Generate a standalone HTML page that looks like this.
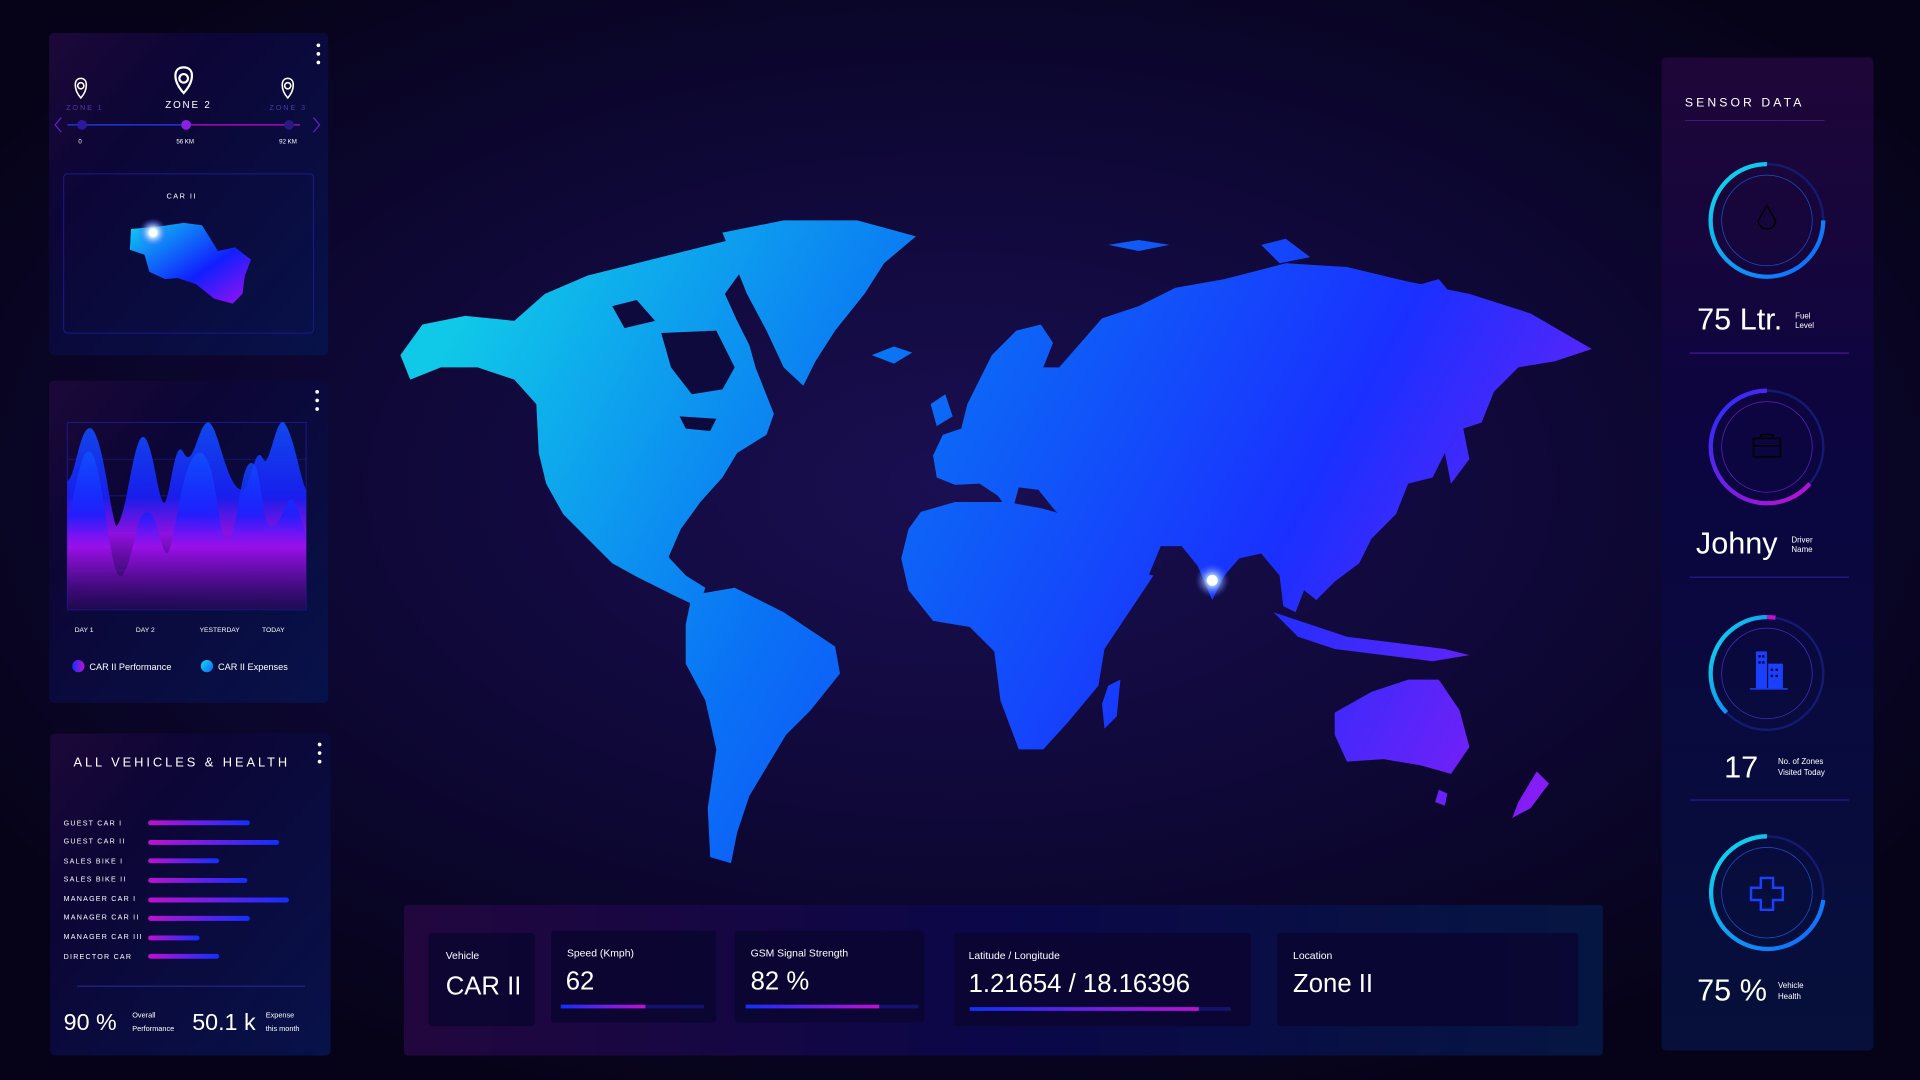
<!DOCTYPE html>
<html><head><meta charset="utf-8"><style>
html,body{margin:0;padding:0;width:1920px;height:1080px;overflow:hidden;background:#07041a}
svg{display:block}
text{font-family:"Liberation Sans",sans-serif;fill:#fff}
</style></head><body>
<svg width="1920" height="1080" viewBox="0 0 1568 882" xmlns="http://www.w3.org/2000/svg">
<defs>
<radialGradient id="bg" cx="50%" cy="45%" r="60%"><stop offset="0" stop-color="#1a0f52"/><stop offset="0.6" stop-color="#0d0733"/><stop offset="1" stop-color="#060318"/></radialGradient>
<linearGradient id="map" gradientUnits="userSpaceOnUse" x1="400" y1="220" x2="1250" y2="680"><stop offset="0" stop-color="#10c8e8"/><stop offset="0.35" stop-color="#0a70f5"/><stop offset="0.7" stop-color="#1a30ff"/><stop offset="1" stop-color="#8a1cf5"/></linearGradient>
<linearGradient id="panel" x1="0" y1="0" x2="1" y2="1"><stop offset="0" stop-color="#1c0838"/><stop offset="0.3" stop-color="#0c0636"/><stop offset="1" stop-color="#07124a"/></linearGradient>
<linearGradient id="rpanel" x1="0" y1="0" x2="0" y2="1"><stop offset="0" stop-color="#1f0638"/><stop offset="0.4" stop-color="#0b0540"/><stop offset="1" stop-color="#06103a"/></linearGradient>
<linearGradient id="bbar" x1="0" y1="0" x2="1" y2="0"><stop offset="0" stop-color="#22073e"/><stop offset="0.5" stop-color="#0b0748"/><stop offset="1" stop-color="#061642"/></linearGradient>
<linearGradient id="bar" x1="0" y1="0" x2="1" y2="0"><stop offset="0" stop-color="#c010d0"/><stop offset="1" stop-color="#1030ff"/></linearGradient>
<linearGradient id="bar2" x1="0" y1="0" x2="1" y2="0"><stop offset="0" stop-color="#1030ff"/><stop offset="1" stop-color="#c010d0"/></linearGradient>
<linearGradient id="wave1" x1="0" y1="0" x2="0" y2="1"><stop offset="0" stop-color="#1050ff"/><stop offset="0.4" stop-color="#1a20ff"/><stop offset="0.6" stop-color="#a010f0"/><stop offset="1" stop-color="#2a0a60" stop-opacity="0.4"/></linearGradient>
<linearGradient id="car" x1="0" y1="0" x2="1" y2="1"><stop offset="0" stop-color="#10d0f0"/><stop offset="0.6" stop-color="#1020ff"/><stop offset="1" stop-color="#a010f0"/></linearGradient>
<linearGradient id="ring1" x1="0" y1="0" x2="1" y2="1"><stop offset="0" stop-color="#10e0e8"/><stop offset="1" stop-color="#1060ff"/></linearGradient>
<linearGradient id="ring2" x1="0" y1="0" x2="1" y2="1"><stop offset="0" stop-color="#2030ff"/><stop offset="1" stop-color="#c010d0"/></linearGradient>
<radialGradient id="glow"><stop offset="0" stop-color="#fff"/><stop offset="0.3" stop-color="#cfefff"/><stop offset="1" stop-color="#3050ff" stop-opacity="0"/></radialGradient>
</defs>
<rect width="1568" height="882" fill="url(#bg)"/>

<!-- Left top panel -->
<rect x="40" y="27" width="228" height="263" rx="4" fill="url(#panel)"/>
<g fill="#fff"><circle cx="260" cy="37" r="1.5"/><circle cx="260" cy="44" r="1.5"/><circle cx="260" cy="51" r="1.5"/></g>
<g fill="none" stroke="#fff" stroke-width="1.3">
<path d="M66 80 C60 73 60 64 66 64 C72 64 72 73 66 80Z"/><circle cx="66" cy="70" r="2.5"/>
<path d="M150 76 C141 66 141 55 150 55 C159 55 159 66 150 76Z" stroke-width="1.8"/><circle cx="150" cy="64" r="3.5" stroke-width="1.8"/>
<path d="M235 80 C229 73 229 64 235 64 C241 64 241 73 235 80Z"/><circle cx="235" cy="70" r="2.5"/>
</g>
<text x="54" y="90" font-size="6" letter-spacing="1.5" style="fill:#4a3aa0">ZONE 1</text>
<text x="135" y="88" font-size="8" letter-spacing="1.5">ZONE 2</text>
<text x="220" y="90" font-size="6" letter-spacing="1.5" style="fill:#4a3aa0">ZONE 3</text>
<rect x="55" y="101.5" width="95" height="1" fill="#2040ff"/>
<rect x="150" y="101.5" width="95" height="1" fill="#c010d0"/>
<path d="M50 96 L45 102 L50 108" fill="none" stroke="#6020d0" stroke-width="1"/>
<path d="M256 96 L261 102 L256 108" fill="none" stroke="#6020d0" stroke-width="1"/>
<circle cx="67" cy="102" r="4" fill="#2a1aa0"/><circle cx="152" cy="102" r="4" fill="#8a20e0"/><circle cx="236" cy="102" r="4" fill="#2a1a80"/>
<text x="64" y="117" font-size="5">0</text><text x="144" y="117" font-size="5">56 KM</text><text x="228" y="117" font-size="5">92 KM</text>
<rect x="52" y="142" width="204" height="130" rx="3" fill="none" stroke="#1a1a90" stroke-width="0.8"/>
<text x="136" y="162" font-size="6" letter-spacing="1.2">CAR II</text>
<path d="M107 187 L130 185 L150 182 L165 184 L170 192 L178 205 L192 202 L205 212 L200 225 L198 240 L190 248 L175 244 L160 232 L145 227 L135 228 L122 222 L118 208 L106 204Z" fill="url(#car)"/>
<circle cx="125" cy="190" r="12" fill="url(#glow)"/><circle cx="125" cy="190" r="3.5" fill="#fff"/>

<!-- Left mid panel (chart) -->
<rect x="40" y="311" width="228" height="263" rx="4" fill="url(#panel)"/>
<g fill="#fff"><circle cx="259" cy="320" r="1.5"/><circle cx="259" cy="327" r="1.5"/><circle cx="259" cy="334" r="1.5"/></g>
<rect x="55" y="345" width="195" height="153" fill="none" stroke="#1a1a90" stroke-width="0.8"/>
<g stroke="#1a1a90" stroke-width="0.6"><line x1="55" y1="375" x2="250" y2="375"/><line x1="55" y1="405" x2="250" y2="405"/><line x1="55" y1="435" x2="250" y2="435"/><line x1="55" y1="466" x2="250" y2="466"/></g>
<path d="M55 393 C62 390 65 345 75 350 C85 360 90 420 95 430 C105 420 110 340 120 360 C127 375 130 415 135 410 C140 400 143 355 150 370 C158 385 162 345 170 345 C178 345 185 400 198 400 C205 400 208 360 215 375 C220 385 225 340 232 345 C240 355 245 390 250 400 L250 498 L55 498Z" fill="url(#wave1)" opacity="0.9"/>
<path d="M55 420 C62 410 65 360 75 370 C85 385 90 480 100 470 C110 455 110 420 120 418 C130 418 132 460 138 450 C145 430 150 365 165 370 C178 380 178 440 185 440 C195 440 195 380 205 378 C215 378 212 430 222 430 C230 430 235 400 240 410 C245 420 248 430 250 437 L250 498 L55 498Z" fill="url(#wave1)" opacity="0.85"/>
<g font-size="5.5"><text x="61" y="516">DAY 1</text><text x="111" y="516">DAY 2</text><text x="163" y="516">YESTERDAY</text><text x="214" y="516">TODAY</text></g>
<circle cx="64" cy="544" r="5" fill="url(#bar2)"/><text x="73" y="547" font-size="7.5">CAR II Performance</text>
<circle cx="169" cy="544" r="5" fill="url(#ring1)"/><text x="178" y="547" font-size="7.5">CAR II Expenses</text>

<!-- Left bottom panel -->
<rect x="41" y="599" width="229" height="263" rx="4" fill="url(#panel)"/>
<g fill="#fff"><circle cx="261" cy="608" r="1.5"/><circle cx="261" cy="615" r="1.5"/><circle cx="261" cy="622" r="1.5"/></g>
<text x="60" y="626" font-size="10.5" letter-spacing="2.4">ALL VEHICLES &amp; HEALTH</text>
<g font-size="5.8" letter-spacing="1">
<text x="52" y="674">GUEST CAR I</text><text x="52" y="689">GUEST CAR II</text><text x="52" y="705">SALES BIKE I</text><text x="52" y="720">SALES BIKE II</text>
<text x="52" y="736">MANAGER CAR I</text><text x="52" y="751">MANAGER CAR II</text><text x="52" y="767">MANAGER CAR III</text><text x="52" y="783">DIRECTOR CAR</text></g>
<g fill="url(#bar)">
<rect x="121" y="670" width="83" height="4" rx="2"/><rect x="121" y="686" width="107" height="4" rx="2"/><rect x="121" y="701" width="58" height="4" rx="2"/><rect x="121" y="717" width="81" height="4" rx="2"/>
<rect x="121" y="733" width="115" height="4" rx="2"/><rect x="121" y="748" width="83" height="4" rx="2"/><rect x="121" y="764" width="42" height="4" rx="2"/><rect x="121" y="779" width="58" height="4" rx="2"/></g>
<rect x="63" y="805" width="186" height="0.7" fill="#2a30b0"/>
<text x="52" y="841" font-size="19">90 %</text><text x="108" y="831" font-size="6">Overall</text><text x="108" y="842" font-size="6">Performance</text>
<text x="157" y="841" font-size="19">50.1 k</text><text x="217" y="831" font-size="6">Expense</text><text x="217" y="842" font-size="6">this month</text>

<!-- World map -->
<g fill="url(#map)">
<path d="M327 290 L345 265 L380 258 L420 262 L445 240 L480 225 L520 215 L560 205 L600 195 L610 215 L592 240 L602 262 L612 282 L617 300 L632 338 L626 355 L602 370 L590 390 L572 410 L556 432 L546 455 L560 470 L576 480 L571 496 L550 486 L520 471 L500 460 L480 440 L460 420 L446 395 L440 370 L438 330 L420 310 L390 300 L360 300 L335 310Z"/>
<path d="M440 245 L470 230 L500 222 L520 230 L510 245 L480 255 L450 258Z"/>
<path d="M590 190 L640 180 L700 180 L748 193 L722 215 L706 240 L682 270 L666 295 L656 315 L640 300 L626 270 L610 240 L600 215Z"/>
<path d="M712 290 L730 283 L745 288 L730 297Z"/>
<path d="M565 486 L600 480 L640 500 L682 528 L686 550 L662 580 L642 600 L627 625 L612 650 L602 680 L597 705 L580 700 L578 660 L585 612 L576 572 L560 542 L560 510Z"/>
<path d="M762 372 L770 355 L785 350 L790 330 L800 310 L810 290 L830 270 L850 265 L860 280 L852 300 L865 300 L900 260 L930 250 L960 235 L1000 228 L1050 215 L1100 218 L1150 230 L1200 240 L1250 256 L1300 285 L1270 295 L1240 300 L1220 320 L1210 345 L1195 350 L1180 370 L1170 390 L1150 395 L1140 420 L1120 440 L1110 460 L1090 475 L1075 490 L1065 482 L1058 500 L1048 495 L1045 470 L1030 452 L1012 456 L1000 470 L990 490 L978 462 L965 446 L948 446 L938 470 L912 478 L895 470 L882 448 L872 428 L860 415 L848 400 L832 398 L826 420 L815 405 L800 395 L780 396 L765 390Z"/>
<path d="M760 330 L772 322 L778 340 L765 348Z"/>
<path d="M742 432 L752 418 L780 410 L822 410 L850 415 L868 420 L882 442 L902 462 L942 470 L922 500 L902 530 L897 560 L872 590 L852 612 L832 612 L817 572 L812 532 L792 512 L762 507 L742 482 L736 456Z"/>
<path d="M905 560 L915 555 L912 585 L902 595 L900 575Z"/>
<path d="M1040 500 L1070 510 L1100 520 L1140 525 L1180 530 L1200 535 L1170 540 L1130 535 L1090 530 L1060 520Z"/>
<path d="M1090 582 L1120 565 L1150 555 L1175 555 L1192 580 L1200 610 L1185 632 L1160 625 L1130 620 L1100 622 L1090 600Z"/>
<path d="M1175 645 L1182 648 L1180 658 L1172 655Z"/>
<path d="M1255 630 L1265 640 L1250 660 L1235 668 L1240 655Z"/>
<path d="M1180 370 L1195 350 L1200 375 L1185 395Z"/>
<path d="M1030 200 L1050 195 L1070 210 L1045 215Z"/>
<path d="M1150 235 L1175 228 L1185 240 L1160 245Z"/>
<path d="M905 200 L930 196 L955 200 L930 205Z"/>
</g>
<g fill="#0f0a3e">
<path d="M540 272 L585 270 L600 300 L590 318 L565 322 L548 300Z"/>
<path d="M500 250 L520 245 L535 262 L510 268Z"/>
<path d="M555 340 L585 342 L580 352 L560 350Z"/>
</g>
<circle cx="990" cy="474" r="14" fill="url(#glow)" opacity="0.8"/><circle cx="990" cy="474" r="4.5" fill="#fff"/>

<!-- Bottom bar -->
<rect x="330" y="739" width="979" height="123" rx="3" fill="url(#bbar)"/>
<g fill="#0a0530" opacity="0.85">
<rect x="350" y="762" width="87" height="76" rx="3"/><rect x="450" y="760" width="135" height="75" rx="3"/>
<rect x="600" y="760" width="155" height="75" rx="3"/><rect x="779" y="762" width="243" height="76" rx="3"/>
<rect x="1043" y="762" width="246" height="76" rx="3"/></g>
<g font-size="8.5"><text x="364" y="783">Vehicle</text><text x="463" y="781">Speed (Kmph)</text><text x="613" y="781">GSM Signal Strength</text><text x="791" y="783">Latitude / Longitude</text><text x="1056" y="783">Location</text></g>
<g font-size="21"><text x="364" y="812">CAR II</text><text x="462" y="808">62</text><text x="613" y="808">82 %</text><text x="791" y="810">1.21654 / 18.16396</text><text x="1056" y="810">Zone II</text></g>
<rect x="458" y="820.5" width="117" height="3" fill="#141470"/><rect x="458" y="820.5" width="69" height="3" fill="url(#bar2)"/>
<rect x="609" y="820.5" width="141" height="3" fill="#141470"/><rect x="609" y="820.5" width="109" height="3" fill="url(#bar2)"/>
<rect x="792" y="822.5" width="213" height="3" fill="#141470"/><rect x="792" y="822.5" width="187" height="3" fill="url(#bar2)"/>

<!-- Right panel -->
<rect x="1357" y="47" width="173" height="811" rx="4" fill="url(#rpanel)"/>
<text x="1376" y="87" font-size="10" letter-spacing="2.5">SENSOR DATA</text>
<rect x="1376" y="98" width="114" height="0.6" fill="#4a2090"/>
<g fill="none">
<circle cx="1443" cy="180" r="46" stroke="#141a70" stroke-width="2"/>
<path d="M1443 134 A46 46 0 1 0 1489 180" stroke="url(#ring1)" stroke-width="3.5"/>
<circle cx="1443" cy="180" r="37" stroke="#1a50d0" stroke-width="0.6"/>
<path d="M1443 168 L1436 180 A7 7 0 1 0 1450 180Z" stroke="#000" stroke-width="1.3"/>
<circle cx="1443" cy="365" r="46" stroke="#141a70" stroke-width="2"/>
<path d="M1443 319 A46 46 0 1 0 1478 395" stroke="url(#ring2)" stroke-width="3.5"/>
<circle cx="1443" cy="365" r="37" stroke="#6020c0" stroke-width="0.6"/>
<rect x="1432" y="358" width="22" height="15" stroke="#000" stroke-width="1.3"/><path d="M1438 358 v-3 h10 v3 M1432 364 h22" stroke="#000" stroke-width="1.2"/>
<circle cx="1443" cy="550" r="46" stroke="#141a70" stroke-width="2"/>
<path d="M1443 504 A46 46 0 0 0 1410 582" stroke="url(#ring1)" stroke-width="3.5"/>
<path d="M1443 504 A46 46 0 0 1 1450 504.5" stroke="#c010d0" stroke-width="3.5"/>
<circle cx="1443" cy="550" r="37" stroke="#4030c0" stroke-width="0.6"/>
<circle cx="1443" cy="729" r="46" stroke="#141a70" stroke-width="2"/>
<path d="M1443 683 A46 46 0 1 0 1489 735" stroke="url(#ring1)" stroke-width="3.5"/>
<circle cx="1443" cy="729" r="37" stroke="#1a50d0" stroke-width="0.6"/>
<path d="M1438 717 h10 v8 h8 v10 h-8 v8 h-10 v-8 h-8 v-10 h8Z" stroke="#1a40ff" stroke-width="2"/>
</g>
<g fill="#1a40ff"><rect x="1434" y="532" width="9" height="30"/><rect x="1444" y="542" width="12" height="20"/><rect x="1429" y="562" width="31" height="1.2"/></g>
<g fill="#0a0540"><rect x="1436" y="535" width="2" height="2"/><rect x="1439" y="535" width="2" height="2"/><rect x="1436" y="540" width="2" height="2"/><rect x="1439" y="540" width="2" height="2"/><rect x="1446" y="546" width="2" height="2"/><rect x="1450" y="546" width="2" height="2"/><rect x="1446" y="551" width="2" height="2"/><rect x="1450" y="551" width="2" height="2"/></g>
<text x="1386" y="269" font-size="25">75 Ltr.</text><text x="1466" y="260" font-size="6.5">Fuel</text><text x="1466" y="268" font-size="6.5">Level</text>
<rect x="1380" y="288" width="130" height="0.7" fill="#6020c0"/>
<text x="1385" y="452" font-size="25">Johny</text><text x="1463" y="443" font-size="6.5">Driver</text><text x="1463" y="451" font-size="6.5">Name</text>
<rect x="1380" y="471" width="130" height="0.7" fill="#3a20b0"/>
<text x="1408" y="635" font-size="25">17</text><text x="1452" y="624" font-size="6.5">No. of Zones</text><text x="1452" y="633" font-size="6.5">Visited Today</text>
<rect x="1380" y="653" width="130" height="0.7" fill="#3a20b0"/>
<text x="1386" y="817" font-size="25">75 %</text><text x="1452" y="807" font-size="6.5">Vehicle</text><text x="1452" y="816" font-size="6.5">Health</text>
</svg>
</body></html>
